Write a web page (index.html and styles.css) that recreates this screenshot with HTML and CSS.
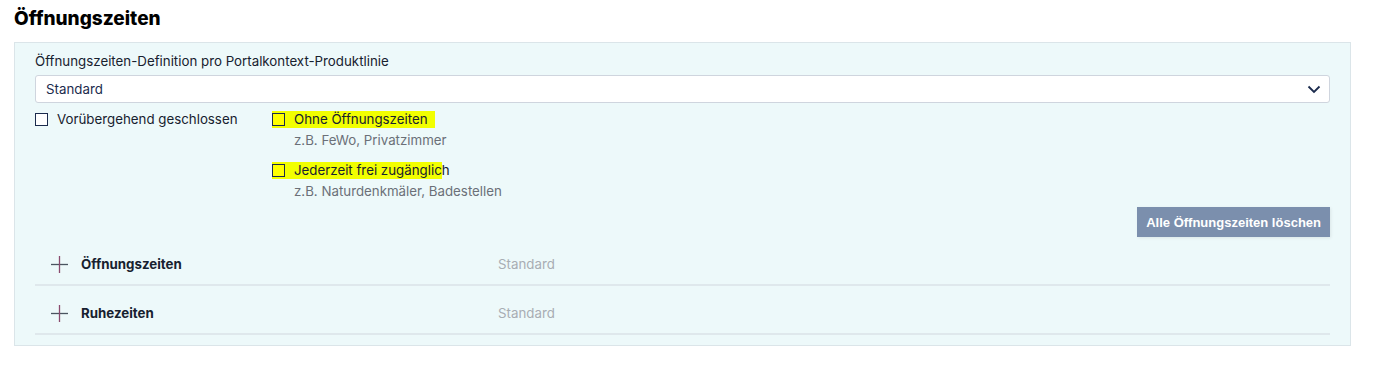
FILE: index.html
```html
<!DOCTYPE html>
<html lang="de">
<head>
<meta charset="utf-8">
<link rel="stylesheet" href="styles.css">
</head>
<body>
<h2 class="title">Öffnungszeiten</h2>
<div class="panel">
  <label class="field-label">Öffnungszeiten-Definition pro Portalkontext-Produktlinie</label>
  <div class="select">
    <span>Standard</span>
    <svg width="14" height="9" viewBox="0 0 14 9"><path d="M1.5 1.5 L7 7 L12.5 1.5" fill="none" stroke="#1b2b4d" stroke-width="1.8"/></svg>
  </div>
  <div class="checks">
    <div class="check">
      <span class="box"></span>
      <span class="check-text">Vorübergehend geschlossen</span>
    </div>
    <div class="check-col">
      <div class="option">
        <div class="check hl">
          <span class="box yellow"></span>
          <span class="check-text wide">Ohne Öffnungszeiten</span>
        </div>
        <div class="hint">z.B. FeWo, Privatzimmer</div>
      </div>
      <div class="option">
        <div class="check hl">
          <span class="box yellow"></span>
          <span class="check-text">Jederzeit frei zugänglic</span><span class="check-text plain">h</span>
        </div>
        <div class="hint">z.B. Naturdenkmäler, Badestellen</div>
      </div>
    </div>
  </div>
  <div class="actions">
    <button class="btn">Alle Öffnungszeiten löschen</button>
  </div>
  <div class="row">
    <svg class="plus" width="17" height="17" viewBox="0 0 17 17"><path d="M0 8.5 H17" stroke="#4a5560" stroke-width="1.3"/><path d="M8.5 0 V17" stroke="#8a4a6e" stroke-width="1.3"/></svg>
    <span class="row-title">Öffnungszeiten</span>
    <span class="row-value">Standard</span>
  </div>
  <div class="row">
    <svg class="plus" width="17" height="17" viewBox="0 0 17 17"><path d="M0 8.5 H17" stroke="#4a5560" stroke-width="1.3"/><path d="M8.5 0 V17" stroke="#8a4a6e" stroke-width="1.3"/></svg>
    <span class="row-title">Ruhezeiten</span>
    <span class="row-value">Standard</span>
  </div>
</div>
</body>
</html>
```
FILE: styles.css
```css
html, body { margin: 0; padding: 0; background: #fff; }
body {
  font-family: "Inter", "Liberation Sans", sans-serif;
  color: #1b2333;
  padding: 0 24px 0 14px;
  font-size: 13.3px;
}
.title {
  margin: 0;
  padding-top: 8px;
  height: 34px;
  font-size: 19px;
  font-weight: 800;
  color: #000;
  line-height: 22px;
}
.panel {
  background: #edf9fa;
  border: 1px solid #dbe5e9;
  padding: 10px 20px 10px 20px;
  box-sizing: border-box;
  width: 1337px;
}
.field-label {
  display: block;
  line-height: 17px;
  color: #17212f;
  margin-bottom: 5px;
}
.select {
  height: 28px;
  box-sizing: border-box;
  background: #fff;
  border: 1px solid #cfd5de;
  border-radius: 3px;
  display: flex;
  align-items: center;
  justify-content: space-between;
  padding: 0 8px 0 10px;
  color: #1b2b4d;
}
.checks {
  display: flex;
  margin-top: 8px;
}
.check {
  display: flex;
  align-items: center;
  height: 17px;
}
.checks > .check { width: 237px; }
.box {
  width: 11px;
  height: 11px;
  border: 1px solid #1b2b4d;
  background: #fff;
  margin-right: 9px;
  flex: none;
}
.box.yellow { background: #ffff00; }
.hl .check-text { background: #f2ff00; }
.hl .check-text.wide { padding-right: 7px; }
.hl .check-text.plain { background: transparent; }
.hl { background: linear-gradient(#f2ff00, #f2ff00) no-repeat; background-size: 22px 100%; }
.hl .box { margin-right: 0; }
.hl .box + .check-text { padding-left: 9px; }
.check-text { line-height: 17px; color: #17212f; }
.check-col { display: flex; flex-direction: column; gap: 13px; }
.hint { color: #6b7078; padding-left: 22px; line-height: 17px; margin-top: 4px; }
.actions {
  display: flex;
  justify-content: flex-end;
  margin-top: 7px;
}
.btn {
  background: #7b8fad;
  color: #fff;
  border: none;
  font-family: "Liberation Sans", sans-serif;
  font-weight: 700;
  font-size: 13px;
  height: 30px;
  padding: 0 9px;
  box-shadow: 1px 1px 3px rgba(0,0,0,0.08);
}
.row {
  display: flex;
  align-items: center;
  height: 49px;
  padding-top: 7px;
  border-bottom: 2px solid #dfe8ec;
  box-sizing: border-box;
  padding-left: 16px;
}
.plus { flex: none; margin-right: 13px; }
.row-title { font-weight: 700; width: 417px; color: #17212f; }
.row-value { color: #a8adb3; }
```
